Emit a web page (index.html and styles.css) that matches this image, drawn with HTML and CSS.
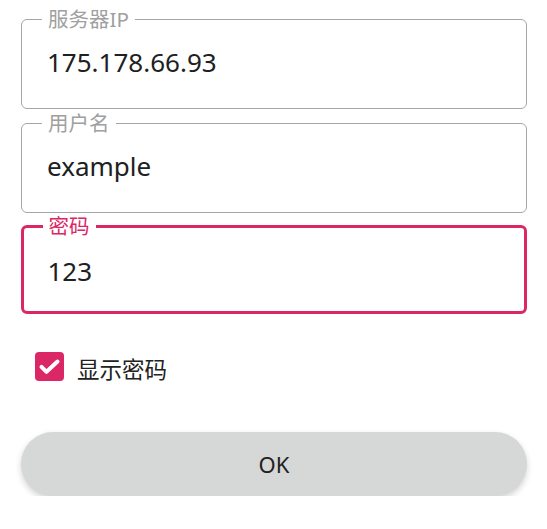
FILE: index.html
```html
<!DOCTYPE html>
<html lang="zh">
<head>
<meta charset="utf-8">
<link rel="stylesheet" href="styles.css">
</head>
<body>
<form class="form">
  <fieldset class="field">
    <legend class="field-label">服务器IP</legend>
    <div class="field-value">175.178.66.93</div>
  </fieldset>
  <fieldset class="field">
    <legend class="field-label">用户名</legend>
    <div class="field-value">example</div>
  </fieldset>
  <fieldset class="field field-focused">
    <legend class="field-label">密码</legend>
    <div class="field-value">123</div>
  </fieldset>
  <label class="check-row">
    <span class="checkbox">
      <svg viewBox="0 0 29 29" width="29" height="29"><path d="M6.5 14.8 L11.5 19.8 L22.5 9.5" fill="none" stroke="#fff" stroke-width="4" stroke-linecap="round" stroke-linejoin="round"/></svg>
    </span>
    <span class="check-text">显示密码</span>
  </label>
  <button type="button" class="ok-btn">OK</button>
</form>
</body>
</html>
```
FILE: styles.css
```css
html, body {
  margin: 0;
  padding: 0;
  background: #ffffff;
}
body {
  font-family: "Noto Sans", "Noto Sans CJK SC", sans-serif;
  color: #222222;
}
.form {
  display: flex;
  flex-direction: column;
  padding: 8px 20px 0 21px;
}
.field {
  margin: 0 0 3px 0;
  padding: 15px 26px 29px 25px;
  border: 1.5px solid #a6a6a6;
  border-radius: 6px;
  min-width: 0;
}
.field-focused {
  border: 3px solid #dc2766;
  margin-top: -1px;
  padding: 16.5px 24.5px 23.5px 23.5px;
}
.field-label {
  margin-left: -5px;
  padding: 0 6px;
  font-size: 20.5px;
  line-height: 22px;
  color: #a0a0a0;
}
.field-focused .field-label {
  color: #dc2766;
}
.field-value {
  font-size: 26px;
  line-height: 34px;
  color: #202020;
}
.check-row {
  display: flex;
  align-items: center;
  gap: 13px;
  margin: 35px 0 0 14px;
  height: 29px;
}
.checkbox {
  width: 29px;
  height: 29px;
  border-radius: 4px;
  background: #dc2766;
  display: flex;
}
.check-text {
  font-size: 22.5px;
  padding-top: 3px;
  color: #222222;
}
.ok-btn {
  margin-top: 51px;
  height: 64px;
  width: 506px;
  border: none;
  border-radius: 32px;
  background: #d6d7d7;
  box-shadow: 0 3px 6px rgba(0,0,0,0.18);
  font-family: "Noto Sans", sans-serif;
  font-size: 22px;
  color: #222222;
}
```
